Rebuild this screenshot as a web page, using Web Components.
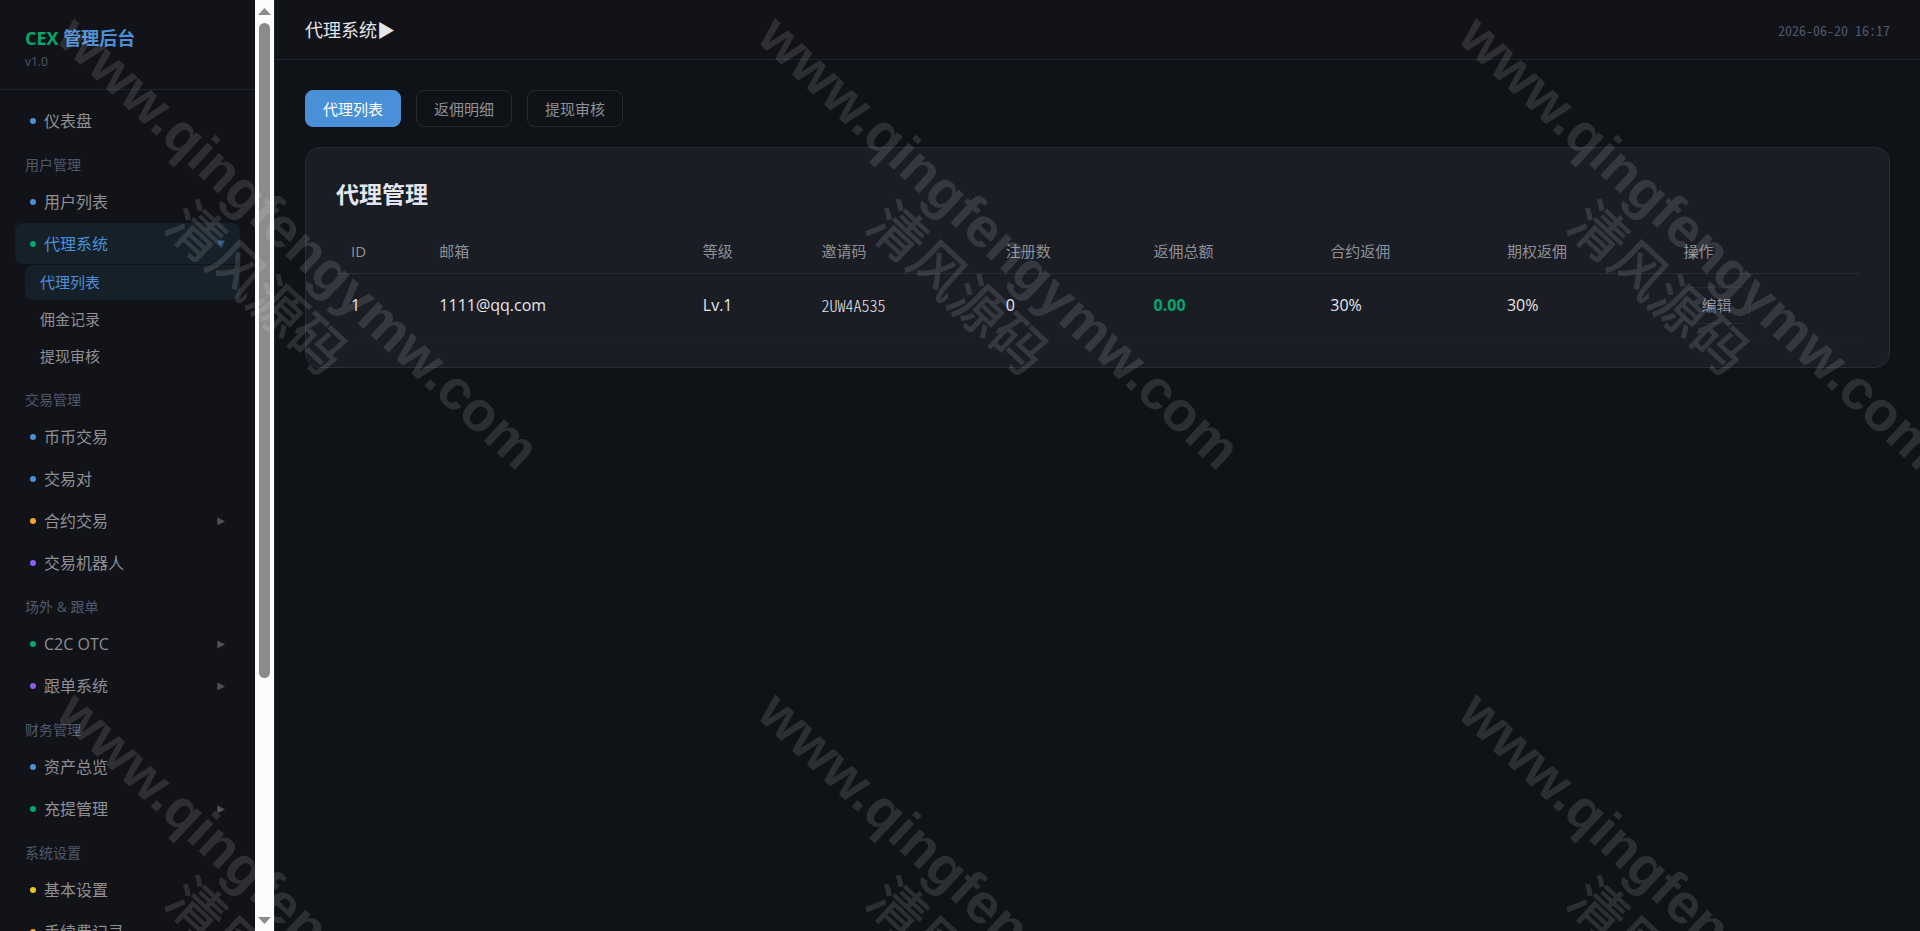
<!DOCTYPE html>
<html lang="zh-CN">
<head>
<meta charset="UTF-8">
<meta name="viewport" content="width=device-width, initial-scale=1">
<title>CEX 管理后台</title>
<style>
    :root {
        --bg: #0f1216;
        --panel: #121318;
        --card: #1b1d25;
        --line: #1f232e;
        --card-line: #2a2c34;
        --text: #e4e6eb;
        --muted: #8e9095;
        --dim: #4e596e;
        --blue: #4a90d9;
        --green: #00a86b;
        --active: #162028;
    }

    body {
        margin: 0;
        background: var(--bg);
        color: var(--text);
        font-family: "Open Sans", "Noto Sans CJK SC", sans-serif;
        font-size: 15px;
    }
</style>
</head>
<body>
<admin-layout>
    <side-bar slot="side">
        <nav-item color="#4a90d9">仪表盘</nav-item>
        <nav-label>用户管理</nav-label>
        <nav-item color="#4a90d9">用户列表</nav-item>
        <nav-item color="#00a86b" arrow="▼" active>代理系统</nav-item>
        <sub-menu>
            <sub-item active>代理列表</sub-item>
            <sub-item>佣金记录</sub-item>
            <sub-item>提现审核</sub-item>
        </sub-menu>
        <nav-label>交易管理</nav-label>
        <nav-item color="#4a90d9">币币交易</nav-item>
        <nav-item color="#4a90d9">交易对</nav-item>
        <nav-item color="#f5a623" arrow="▶">合约交易</nav-item>
        <nav-item color="#8b5cf6">交易机器人</nav-item>
        <nav-label>场外 &amp; 跟单</nav-label>
        <nav-item color="#00a86b" arrow="▶">C2C OTC</nav-item>
        <nav-item color="#8b5cf6" arrow="▶">跟单系统</nav-item>
        <nav-label>财务管理</nav-label>
        <nav-item color="#4a90d9">资产总览</nav-item>
        <nav-item color="#00a86b" arrow="▶">充提管理</nav-item>
        <nav-label>系统设置</nav-label>
        <nav-item color="#eac80c">基本设置</nav-item>
        <nav-item color="#f5a623">手续费记录</nav-item>
    </side-bar>
    <top-bar slot="top" time="2026-06-20 16:17">代理系统▶</top-bar>
    <tab-bar>
        <tab-button active>代理列表</tab-button>
        <tab-button>返佣明细</tab-button>
        <tab-button>提现审核</tab-button>
    </tab-bar>
    <data-card heading="代理管理">
        <agent-table></agent-table>
    </data-card>
</admin-layout>
<water-mark></water-mark>

<script>
class AdminLayout extends HTMLElement {
    constructor() {
        super();
        this.attachShadow({ mode: "open" });
        this.shadowRoot.innerHTML = `
            <style>
                :host {
                    display: flex;
                    height: 100vh;
                    overflow: hidden;
                }

                .main {
                    flex: 1;
                    min-width: 0;
                    overflow: hidden;
                }

                main {
                    display: grid;
                    gap: 20px;
                    padding: 30px;
                }
            </style>

            <slot name="side"></slot>
            <div class="main">
                <slot name="top"></slot>
                <main><slot></slot></main>
            </div>
        `;
    }
}

class SideBar extends HTMLElement {
    constructor() {
        super();
        this.attachShadow({ mode: "open" });
        this.shadowRoot.innerHTML = `
            <style>
                :host {
                    display: flex;
                    flex: none;
                    background: var(--panel);
                    border-right: 1px solid var(--line);
                }

                .content {
                    width: 255px;
                    overflow: hidden;
                }

                header {
                    padding: 25px 25px 18px;
                    border-bottom: 1px solid var(--line);
                }

                .logo {
                    font-size: 18px;
                    line-height: 27px;
                    font-weight: 700;
                    color: var(--blue);
                }

                .logo span {
                    color: var(--green);
                }

                .version {
                    font-size: 12px;
                    line-height: 19px;
                    color: var(--dim);
                }

                nav {
                    display: flex;
                    flex-direction: column;
                    padding: 10px 15px;
                }
            </style>

            <div class="content">
                <header>
                    <div class="logo"><span>CEX</span> 管理后台</div>
                    <div class="version">v1.0</div>
                </header>
                <nav><slot></slot></nav>
            </div>
            <scroll-track></scroll-track>
        `;
    }
}

class ScrollTrack extends HTMLElement {
    constructor() {
        super();
        this.attachShadow({ mode: "open" });
        this.shadowRoot.innerHTML = `
            <style>
                :host {
                    display: flex;
                    flex-direction: column;
                    align-items: center;
                    width: 19px;
                    background: #fcfcfc;
                }

                svg {
                    flex: none;
                    fill: #8b8b8b;
                }

                .track {
                    flex: 1;
                    width: 11px;
                }

                .thumb {
                    height: 74%;
                    border-radius: 6px;
                    background: #8b8b8b;
                }
            </style>

            <svg width="19" height="23" viewBox="0 0 19 23"><path d="M3 15 L9.500 8 L16 15Z"/></svg>
            <div class="track"><div class="thumb"></div></div>
            <svg width="19" height="23" viewBox="0 0 19 23"><path d="M3 9 L9.500 16 L16 9Z"/></svg>
        `;
    }
}

class NavLabel extends HTMLElement {
    constructor() {
        super();
        this.attachShadow({ mode: "open" });
        this.shadowRoot.innerHTML = `
            <style>
                :host {
                    display: block;
                    padding: 13px 10px 6px;
                    font-size: 14px;
                    line-height: 20px;
                    color: var(--dim);
                }
            </style>
            <slot></slot>
        `;
    }
}

class NavItem extends HTMLElement {
    constructor() {
        super();
        this.attachShadow({ mode: "open" });
    }

    connectedCallback() {
        this.render();
    }

    render() {
        const color = this.getAttribute('color');
        const arrow = this.getAttribute('arrow') || '';

        this.shadowRoot.innerHTML = `
            <style>
                :host {
                    display: block;
                    margin-bottom: 1px;
                }

                a {
                    display: flex;
                    align-items: center;
                    gap: 8px;
                    height: 41px;
                    padding: 0 15px;
                    border-radius: 8px;
                    font-size: 16px;
                    line-height: 20px;
                    color: var(--muted);
                    text-decoration: none;
                }

                :host([active]) a {
                    background: var(--active);
                    color: var(--blue);
                }

                .dot {
                    width: 6px;
                    height: 6px;
                    border-radius: 50%;
                    background: ${color};
                }

                .arrow {
                    margin-left: auto;
                    font-family: "DejaVu Sans", sans-serif;
                    font-size: 10px;
                    opacity: 0.5;
                }
            </style>

            <a href="#">
                <span class="dot"></span>
                <slot></slot>
                ${arrow ? `<span class="arrow">${arrow}</span>` : ''}
            </a>
        `;
    }
}

class SubMenu extends HTMLElement {
    constructor() {
        super();
        this.attachShadow({ mode: "open" });
        this.shadowRoot.innerHTML = `
            <style>
                :host {
                    display: grid;
                    gap: 2px;
                    padding: 0 0 3px 10px;
                }
            </style>
            <slot></slot>
        `;
    }
}

class SubItem extends HTMLElement {
    constructor() {
        super();
        this.attachShadow({ mode: "open" });
        this.shadowRoot.innerHTML = `
            <style>
                :host {
                    display: block;
                }

                a {
                    display: block;
                    padding: 7px 15px 8px;
                    border-radius: 8px;
                    line-height: 20px;
                    color: var(--muted);
                    text-decoration: none;
                }

                :host([active]) a {
                    background: var(--active);
                    color: var(--blue);
                }
            </style>
            <a href="#"><slot></slot></a>
        `;
    }
}

class TopBar extends HTMLElement {
    constructor() {
        super();
        this.attachShadow({ mode: "open" });
    }

    connectedCallback() {
        this.shadowRoot.innerHTML = `
            <style>
                :host {
                    display: flex;
                    align-items: center;
                    justify-content: space-between;
                    height: 59px;
                    padding: 0 30px;
                    background: var(--panel);
                    border-bottom: 1px solid var(--line);
                    font-size: 18px;
                    line-height: 24px;
                }

                time {
                    font-family: "Noto Sans CJK SC", monospace;
                    font-feature-settings: "hwid";
                    font-size: 14px;
                    color: var(--dim);
                }
            </style>
            <div><slot></slot></div>
            <time>${this.getAttribute('time')}</time>
        `;
    }
}

class TabBar extends HTMLElement {
    constructor() {
        super();
        this.attachShadow({ mode: "open" });
        this.shadowRoot.innerHTML = `
            <style>
                :host {
                    display: flex;
                    gap: 15px;
                }
            </style>
            <slot></slot>
        `;
    }
}

class TabButton extends HTMLElement {
    constructor() {
        super();
        this.attachShadow({ mode: "open" });
        this.shadowRoot.innerHTML = `
            <style>
                :host {
                    display: block;
                }

                button {
                    display: block;
                    height: 37px;
                    padding: 0 17px;
                    border: 1px solid #26292f;
                    border-radius: 8px;
                    background: transparent;
                    color: var(--muted);
                    font: inherit;
                    line-height: 20px;
                    cursor: pointer;
                }

                :host([active]) button {
                    border-color: var(--blue);
                    background: var(--blue);
                    color: #fff;
                }
            </style>
            <button type="button"><slot></slot></button>
        `;
    }
}

class DataCard extends HTMLElement {
    constructor() {
        super();
        this.attachShadow({ mode: "open" });
    }

    connectedCallback() {
        this.shadowRoot.innerHTML = `
            <style>
                :host {
                    display: block;
                    padding: 30px;
                    border: 1px solid var(--card-line);
                    border-radius: 15px;
                    background: var(--card);
                }

                h2 {
                    margin: 0 0 20px;
                    font-size: 23px;
                    line-height: 32px;
                    font-weight: 700;
                }
            </style>
            <h2>${this.getAttribute('heading')}</h2>
            <slot></slot>
        `;
    }
}

class AgentTable extends HTMLElement {
    constructor() {
        super();
        this.attachShadow({ mode: "open" });
    }

    connectedCallback() {
        const columns = [
            ['ID', 5.8], ['邮箱', 17.3], ['等级', 7.8], ['邀请码', 12.1], ['注册数', 9.7],
            ['返佣总额', 11.6], ['合约返佣', 11.6], ['期权返佣', 11.6], ['操作', 12.5]
        ];

        this.shadowRoot.innerHTML = `
            <style>
                :host {
                    display: block;
                }

                table {
                    width: 100%;
                    table-layout: fixed;
                    border-collapse: collapse;
                }

                th, td {
                    padding: 0 15px;
                    text-align: left;
                    line-height: 20px;
                }

                th {
                    height: 41px;
                    padding-bottom: 2px;
                    border-bottom: 1px solid var(--card-line);
                    color: var(--muted);
                    font-weight: 400;
                }

                td {
                    height: 62px;
                    border-bottom: 1px solid #1c1e26;
                    font-size: 16px;
                }

                .code {
                    font-family: "Noto Sans CJK SC", monospace;
                    font-feature-settings: "hwid";
                    font-weight: 300;
                }

                .total {
                    color: var(--green);
                    font-weight: 700;
                }

                button {
                    display: block;
                    height: 37px;
                    padding: 0 17px;
                    border: 1px solid #262830;
                    border-radius: 8px;
                    background: transparent;
                    color: var(--muted);
                    font: inherit;
                    font-size: 15px;
                    line-height: 20px;
                    cursor: pointer;
                }
            </style>

            <table>
                <colgroup>${columns.map(c => `<col style="width: ${c[1]}%">`).join('')}</colgroup>
                <thead>
                    <tr>${columns.map(c => `<th scope="col">${c[0]}</th>`).join('')}</tr>
                </thead>
                <tbody>
                    <tr>
                        <td>1</td>
                        <td>1111@qq.com</td>
                        <td>Lv.1</td>
                        <td class="code">2UW4A535</td>
                        <td>0</td>
                        <td class="total">0.00</td>
                        <td>30%</td>
                        <td>30%</td>
                        <td><button type="button">编辑</button></td>
                    </tr>
                </tbody>
            </table>
        `;
    }
}

/* Site watermark, tiled over the whole page */
class WaterMark extends HTMLElement {
    constructor() {
        super();
        this.attachShadow({ mode: "open" });
    }

    connectedCallback() {
        let marks = '';
        for (let row = 0; row < 2; row++) {
            for (let col = 0; col < 3; col++) {
                marks += `
                    <g transform="translate(${54 + col * 701} ${40 + row * 676}) rotate(43)">
                        <text class="site">www.qingfengymw.com</text>
                        <text class="name" x="208" y="63">清风源码</text>
                    </g>`;
            }
        }

        this.shadowRoot.innerHTML = `
            <style>
                :host {
                    position: fixed;
                    inset: 0;
                    pointer-events: none;
                    overflow: hidden;
                }

                svg {
                    width: 100%;
                    height: 100%;
                    fill: #fff;
                    opacity: 0.12;
                }

                .site {
                    font: 700 56px "Liberation Sans", sans-serif;
                }

                .name {
                    font: 400 55px "Noto Sans CJK SC", sans-serif;
                    stroke: #fff;
                }
            </style>
            <svg aria-hidden="true">${marks}</svg>
        `;
    }
}

customElements.define("admin-layout", AdminLayout);
customElements.define("side-bar", SideBar);
customElements.define("scroll-track", ScrollTrack);
customElements.define("nav-label", NavLabel);
customElements.define("nav-item", NavItem);
customElements.define("sub-menu", SubMenu);
customElements.define("sub-item", SubItem);
customElements.define("top-bar", TopBar);
customElements.define("tab-bar", TabBar);
customElements.define("tab-button", TabButton);
customElements.define("data-card", DataCard);
customElements.define("agent-table", AgentTable);
customElements.define("water-mark", WaterMark);
</script>
</body>
</html>
